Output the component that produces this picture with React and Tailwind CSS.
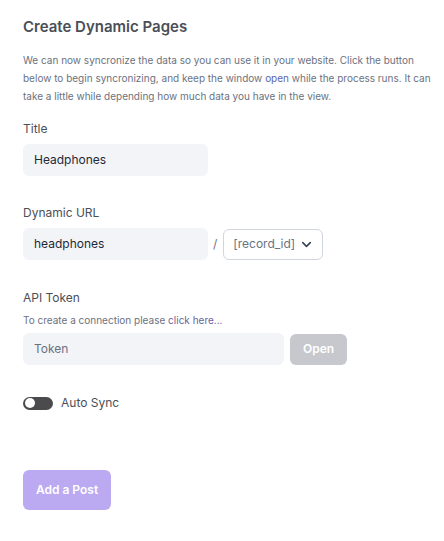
import { ChevronDown } from 'lucide-react'

export default function App() {
  return (
    <div className="min-h-screen bg-white pl-[23px] pr-[8px] pt-[17px] text-gray-600" style={{ fontFamily: 'Inter, "Noto Sans", sans-serif' }}>
      <h1 className="text-[15px] font-semibold leading-5 text-[#4a4f57]">Create Dynamic Pages</h1>
      <p className="mt-[14px] text-[10px] leading-[18px] text-[#6b7280]">
        We can now syncronize the data so you can use it in your website. Click the button below to begin syncronizing, and keep the window <span className="text-[#5b64a8]">open</span> while the process runs. It can take a little while depending how much data you have in the view.
      </p>

      <div className="mt-[14px]">
        <label className="block text-[12px] leading-5 text-[#4a4f57]">Title</label>
        <div className="mt-[5px] flex h-8 w-[185px] items-center rounded-md bg-[#f3f4f7] px-[11px] text-[12px] text-gray-800">Headphones</div>
      </div>

      <div className="mt-[27px]">
        <label className="block text-[12px] leading-5 text-[#4a4f57]">Dynamic URL</label>
        <div className="mt-[5px] flex items-center">
          <div className="flex h-8 w-[185px] items-center rounded-md bg-[#f3f4f7] px-[11px] text-[12px] text-gray-800">headphones</div>
          <span className="ml-[5px] text-[12px] text-gray-500">/</span>
          <div className="ml-[6px] flex h-[31px] w-[100px] items-center justify-between rounded-md border border-gray-300 pl-[9px] pr-[8px] text-[12px] text-gray-500">
            [record_id]
            <ChevronDown size={15} strokeWidth={2.5} className="text-gray-700" />
          </div>
        </div>
      </div>

      <div className="mt-[28px]">
        <label className="block text-[12px] leading-5 text-[#4a4f57]">API Token</label>
        <p className="mt-[4px] text-[10px] leading-4 text-[#6b7280]">To create a connection please <span className="text-[#6d5fa0]">click here...</span></p>
        <div className="mt-[5px] flex items-center gap-[6px]">
          <div className="flex h-8 w-[261px] items-center rounded-md bg-[#f3f4f7] px-[11px] text-[12px] text-gray-500">Token</div>
          <button className="h-[31px] w-[57px] rounded-md bg-[#c6c8cd] text-[12px] font-semibold text-white">Open</button>
        </div>
      </div>

      <div className="mt-[29px] flex items-center gap-[8px]">
        <div className="flex h-[13px] w-[30px] items-center rounded-full bg-[#4b4b4d] px-[2px]">
          <div className="h-[10px] w-[10px] rounded-full bg-white" />
        </div>
        <span className="text-[12px] text-[#4a4f57]">Auto Sync</span>
      </div>

      <button className="mt-[58px] h-10 w-[88px] rounded-md bg-[#bba9f2] text-[12px] font-semibold text-white">Add a Post</button>
    </div>
  )
}
